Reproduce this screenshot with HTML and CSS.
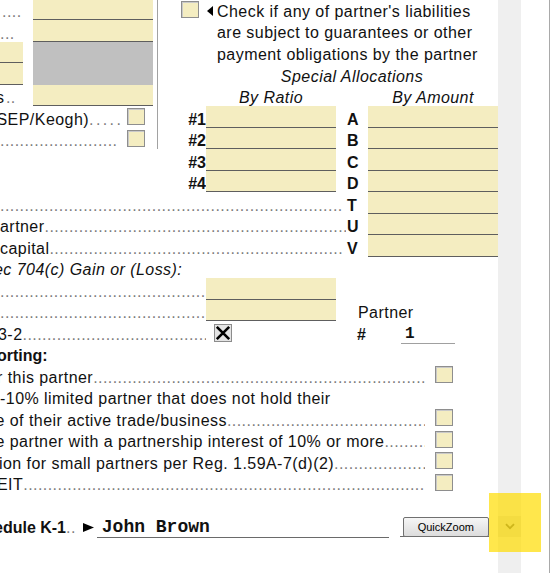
FILE: index.html
```html
<!DOCTYPE html>
<html lang="en">
<head>
<meta charset="utf-8">
<title>Partner worksheet</title>
<link rel="stylesheet" href="styles.css">
</head>
<body>
<div class="screen">
  <div class="viewport">
    <div class="form">
      <!-- top left fragments -->
      <div class="ln lead0"><span class="dots">....</span></div>
      <div class="ln lead1"><span class="dots">...</span></div>
      <div class="cells small-fld"><div class="cell"></div><div class="cell"></div></div>
      <div class="ln lead4"><span class="t cut-s">s</span><span class="t dt">..</span></div>

      <div class="bigfld"><div class="cell"></div><div class="cell"></div><div class="gray"></div><div class="cell"></div></div>
      <div class="vline"></div>

      <div class="cbwrap cb-top"><span class="cb"></span></div>
      <div class="check-text"><span class="tri-left"></span><p>Check if any of partner's liabilities<br>are subject to guarantees or other<br>payment obligations by the partner</p></div>
      <div class="ln center it spec"><span class="t">Special Allocations</span></div>
      <div class="ln center it byratio"><span class="t">By Ratio</span></div>
      <div class="ln center it byamount"><span class="t">By Amount</span></div>

      <div class="ln sep"><span class="t cut-sep">SEP/Keogh)</span><span class="t dots wide">.....</span></div>
      <div class="cbwrap cb-sep"><span class="cb"></span></div>
      <div class="ln sep2"><span class="dots">....................................................................................................</span></div>
      <div class="cbwrap cb-sep2"><span class="cb"></span></div>

      <div class="nums"><span>#1</span><span>#2</span><span>#3</span><span>#4</span></div>
      <div class="cells ratio"><div class="cell"></div><div class="cell"></div><div class="cell"></div><div class="cell"></div></div>
      <div class="letters"><span>A</span><span>B</span><span>C</span><span>D</span><span>T</span><span>U</span><span>V</span></div>
      <div class="cells amount"><div class="cell"></div><div class="cell"></div><div class="cell"></div><div class="cell"></div><div class="cell"></div><div class="cell"></div><div class="cell"></div></div>

      <div class="ln rowT"><span class="dots">........................................................................................................................</span></div>
      <div class="ln rowU"><span class="t">artner</span><span class="dots">........................................................................................................................</span></div>
      <div class="ln rowV"><span class="t">capital</span><span class="dots">........................................................................................................................</span></div>
      <div class="ln it gain"><span class="t cut-e">ec 704(c) Gain or (Loss):</span></div>

      <div class="ln r13"><span class="dots">....................................................................................................</span></div>
      <div class="ln r14"><span class="dots">....................................................................................................</span></div>
      <div class="cells fld2"><div class="cell"></div><div class="cell"></div></div>
      <div class="ln r15"><span class="t cut-3">3-2</span><span class="dots">....................................................................................................</span></div>
      <div class="xbox">
        <svg width="18" height="18" viewBox="0 0 18 18"><rect x="0.5" y="0.5" width="17" height="17" fill="#e4e4e4" stroke="#8c8c8c"/><path d="M2.8 2.8 L15.2 15.2 M15.2 2.8 L2.8 15.2" stroke="#000" stroke-width="2.6" fill="none"/></svg>
      </div>
      <div class="ln partner"><span class="t">Partner</span></div>
      <div class="ln pnum"><span class="t b hash">#</span><span class="pfield">1</span></div>

      <div class="ln b orting"><span class="t cut-o">orting:</span></div>
      <div class="ln r17"><span class="t cut-r">r this partner</span><span class="dots">............................................................................................................................</span></div>
      <div class="cbwrap cb17"><span class="cb"></span></div>
      <div class="ln r18"><span class="t">-10% limited partner that does not hold their</span></div>
      <div class="ln r19"><span class="t cut-e2">e of their active trade/business</span><span class="dots">............................................................................................................................</span></div>
      <div class="cbwrap cb19"><span class="cb"></span></div>
      <div class="ln r20"><span class="t cut-e2">e partner with a partnership interest of 10% or more</span><span class="dots">............................................................................................................................</span></div>
      <div class="cbwrap cb20"><span class="cb"></span></div>
      <div class="ln r21"><span class="t cut-i">ion for small partners per Reg. 1.59A-7(d)(2)</span><span class="dots">............................................................................................................................</span></div>
      <div class="cbwrap cb21"><span class="cb"></span></div>
      <div class="ln r22"><span class="t cut-E">EIT</span><span class="dots">............................................................................................................................</span></div>
      <div class="cbwrap cb22"><span class="cb"></span></div>

      <div class="ln brow">
        <span class="t b cut-ed">edule K-1</span><span class="t dt">..</span>
        <svg class="tri-right" width="11" height="9" viewBox="0 0 11 9"><polygon points="0,0 11,4.5 0,9" fill="#000"/></svg>
        <span class="namefield">John Brown</span>
        <span class="qzwrap"><button class="qz" type="button">QuickZoom</button></span>
      </div>
    </div>
  </div>
  <div class="scrollbar">
    <div class="sb-down"><svg width="10" height="7" viewBox="0 0 10 7"><path d="M1 1.2 L5 5.2 L9 1.2" stroke="#5a5a5a" stroke-width="1.8" fill="none"/></svg></div>
  </div>
  <div class="gutter"></div>
  <div class="edge"></div>
  <div class="highlight"></div>
</div>
</body>
</html>
```

FILE: styles.css
```css
* { box-sizing: border-box; }
html, body { margin: 0; padding: 0; background: #fff; }
body {
  width: 550px; height: 573px; overflow: hidden;
  font-family: "Liberation Sans", Arial, sans-serif;
  font-size: 16px; letter-spacing: 0.45px; color: #111;
}
.screen { position: relative; display: flex; width: 550px; height: 573px; }
.viewport { flex: none; width: 498px; height: 573px; overflow: hidden; }
.form {
  display: grid;
  grid-template-columns: 23px 10px 94px 18px 8px 4px 1px 23px 18px 7px 8px 18px 104px 11px 21px 67px 18px 45px;
  grid-template-rows: repeat(27, 21.5px);
  width: 498px;
  margin-top: -1.5px;
}
.scrollbar {
  flex: none; width: 23px; height: 573px; background: #efefef;
  display: flex; flex-direction: column; justify-content: flex-end; padding-bottom: 36px;
}
.sb-down { height: 21px; background: #d9d9d9; display: flex; align-items: center; justify-content: center; }
.sb-down svg { display: block; }
.gutter { flex: none; width: 28px; }
.edge { flex: none; width: 1px; background: #a9a9a9; }
.highlight { position: absolute; left: 489px; top: 493px; width: 52px; height: 59px; background: rgba(255, 221, 0, 0.7); }

/* text lines */
.ln { display: flex; align-items: flex-end; overflow: hidden; white-space: nowrap; line-height: 17px; }
.ln .t { flex: none; }
.ln .dots { flex: 1 1 0; min-width: 0; overflow: hidden; color: #7c7c7c; font-weight: normal; }
.ln .dots.wide { flex: none; letter-spacing: 2.4px; }
.dt { color: #7c7c7c; font-weight: normal; letter-spacing: 0.45px; }
.center { justify-content: center; }
.it { font-style: italic; }
.b { font-weight: bold; letter-spacing: 0; }

/* fields */
.cells { display: grid; grid-auto-rows: 21.5px; }
.cell { background: #f4edc1; border-bottom: 1px solid #5e5e5e; }
.gray { background: #c0c0c0; grid-row: span 2; }
.bigfld { grid-area: 1 / 3 / 6 / 6; display: grid; grid-template-rows: repeat(5, 21.5px); }
.small-fld { grid-area: 3 / 1 / 5 / 2; }
.ratio { grid-area: 6 / 11 / 10 / 14; }
.amount { grid-area: 6 / 16 / 13 / 19; }
.fld2 { grid-area: 14 / 11 / 16 / 14; }
.vline { grid-area: 1 / 7 / 8 / 8; background: #a2a2a2; }

/* checkboxes */
.cbwrap { display: flex; align-items: center; }
.cb {
  display: block; width: 18px; height: 17px; background: #f4edc1;
  border: 1px solid #8e8e8e; box-shadow: inset 1px 1px 0 #c9c9c9;
}
.cb-top { grid-area: 1 / 9 / 2 / 10; }
.cb-sep { grid-area: 6 / 4 / 7 / 5; }
.cb-sep2 { grid-area: 7 / 4 / 8 / 5; }
.cb17 { grid-area: 18 / 17 / 19 / 18; }
.cb19 { grid-area: 20 / 17 / 21 / 18; }
.cb20 { grid-area: 21 / 17 / 22 / 18; }
.cb21 { grid-area: 22 / 17 / 23 / 18; }
.cb22 { grid-area: 23 / 17 / 24 / 18; }
.xbox { grid-area: 16 / 12 / 17 / 13; display: flex; align-items: center; padding-top: 2px; }
.xbox svg { display: block; }

/* top-left fragments */
.lead0 { grid-area: 1 / 1 / 2 / 3; padding-left: 2px; }
.lead1 { grid-area: 2 / 1 / 3 / 3; }
.lead4 { grid-area: 5 / 1 / 6 / 3; }
.cut-s { margin-left: -4px; margin-right: 1.5px; }

/* check text */
.check-text { grid-area: 1 / 11 / 4 / 19; display: flex; align-items: flex-start; white-space: nowrap; }
.tri-left {
  flex: none; width: 0; height: 0; margin: 7px 0 0 1px;
  border-right: 6px solid #000; border-top: 5px solid transparent; border-bottom: 5px solid transparent;
}
.check-text p { margin: 0 0 0 4px; padding-top: 2px; line-height: 21.5px; }
.spec { grid-area: 4 / 11 / 5 / 19; }
.byratio { grid-area: 5 / 11 / 6 / 14; }
.byamount { grid-area: 5 / 16 / 6 / 19; }

/* left rows */
.sep { grid-area: 6 / 1 / 7 / 4; padding-right: 10px; }
.cut-sep { margin-left: -3.5px; }
.sep2 { grid-area: 7 / 1 / 8 / 4; padding-right: 10px; }
.nums { grid-area: 6 / 9 / 10 / 11; display: grid; grid-auto-rows: 21.5px; font-weight: bold; letter-spacing: 0; line-height: 17px; }
.nums span, .letters span { display: flex; align-items: flex-end; }
.nums span { justify-content: flex-end; }
.letters { grid-area: 6 / 15 / 13 / 16; display: grid; grid-auto-rows: 21.5px; font-weight: bold; letter-spacing: 0; line-height: 17px; }
.rowT { grid-area: 10 / 1 / 11 / 15; padding-right: 4px; }
.rowU { grid-area: 11 / 1 / 12 / 15; padding-right: 1px; }
.rowV { grid-area: 12 / 1 / 13 / 15; padding-right: 4px; }
.gain { grid-area: 13 / 1 / 14 / 19; }
.cut-e { margin-left: -6px; }
.r13 { grid-area: 14 / 1 / 15 / 11; }
.r14 { grid-area: 15 / 1 / 16 / 11; }
.r15 { grid-area: 16 / 1 / 17 / 11; }
.cut-3 { margin-left: -2px; }
.partner { grid-area: 15 / 15 / 16 / 19; padding-left: 11px; }
.pnum { grid-area: 16 / 15 / 17 / 19; padding-left: 10px; overflow: visible; }
.hash { width: 44px; }
.pfield {
  width: 54px; padding-left: 4px; margin-bottom: -1px; border-bottom: 1px solid #a0a0a0;
  font-family: "Liberation Mono", "Courier New", monospace; font-weight: bold; letter-spacing: 0;
}
.orting { grid-area: 17 / 1 / 18 / 19; }
.cut-o { margin-left: -3px; }
.r17 { grid-area: 18 / 1 / 19 / 17; padding-right: 10px; }
.cut-r { margin-left: -3px; }
.r18 { grid-area: 19 / 1 / 20 / 19; }
.r19 { grid-area: 20 / 1 / 21 / 17; padding-right: 10px; }
.r20 { grid-area: 21 / 1 / 22 / 17; padding-right: 10px; }
.r21 { grid-area: 22 / 1 / 23 / 17; padding-right: 10px; }
.r22 { grid-area: 23 / 1 / 24 / 17; padding-right: 10px; }
.cut-e2 { margin-left: -4.5px; }
.cut-i { margin-left: -1px; }
.cut-E { margin-left: -3px; }

/* bottom row */
.brow { grid-area: 25 / 1 / 26 / 19; overflow: visible; }
.cut-ed { margin-left: -6px; }
.tri-right { flex: none; display: block; margin: 0 0 4px 7px; }
.namefield {
  flex: none; width: 292px; margin-left: 3px; margin-bottom: -2px; padding-left: 5px;
  border-bottom: 1px solid #6a6a6a; line-height: 20px;
  font-family: "Liberation Mono", "Courier New", monospace; font-weight: bold; font-size: 18px; letter-spacing: 0;
}
.qzwrap { flex: none; margin-left: 11px; margin-bottom: -1px; padding-left: 3px; border-bottom: 1px solid #6a6a6a; display: flex; }
.qz {
  width: 86px; height: 20px; margin: 0 0 -1px 0; padding: 0;
  font-family: "Liberation Sans", Arial, sans-serif; font-size: 11px; letter-spacing: 0; color: #000;
  background: linear-gradient(#f6f6f6, #dcdcdc); border: 1px solid #707070; border-radius: 2px;
}
```
